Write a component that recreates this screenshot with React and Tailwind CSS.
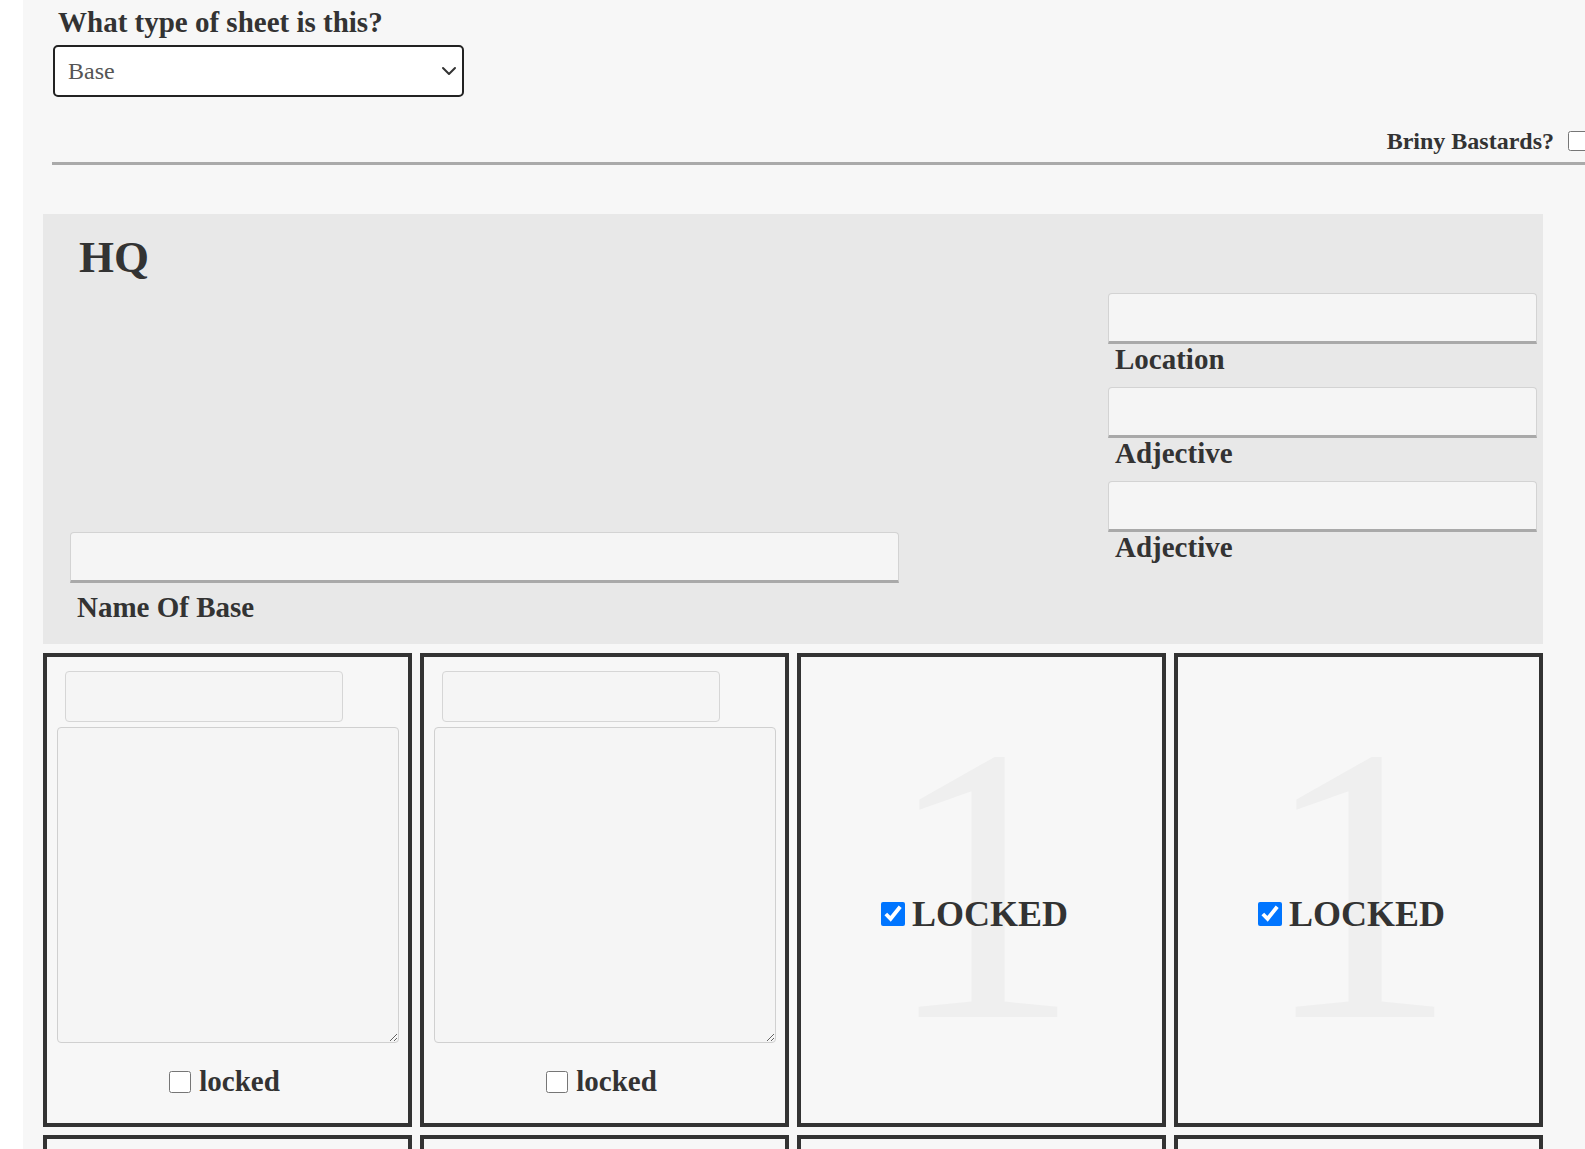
import { ChevronDown } from 'lucide-react'

const serif = "font-['Liberation_Serif','Times_New_Roman',serif]"

function Field({ className = '' }) {
  return (
    <input
      type="text"
      className={`block h-[51px] bg-[#f5f5f5] border border-[#d3d3d3] border-b-[3px] border-b-[#a9a9a9] rounded-t-[4px] outline-none ${className}`}
    />
  )
}

function Label({ children, className = '' }) {
  return <div className={`text-[29px] leading-[29px] font-bold text-[#333] ${className}`}>{children}</div>
}

function OpenCard() {
  return (
    <div className="h-[474px] border-4 border-[#333] bg-[#f7f7f7] flex flex-col">
      <input
        type="text"
        className="ml-[18px] mt-[14px] w-[278px] h-[51px] bg-[#f5f5f5] border border-[#d6d6d6] rounded-[4px] outline-none"
      />
      <textarea className="ml-[10px] mt-[5px] w-[342px] h-[316px] bg-[#f5f5f5] border border-[#d0d0d0] rounded-[4px] outline-none" />
      <label className="mt-[24px] flex items-center justify-center gap-[8px] pr-[6px]">
        <input type="checkbox" className="w-[22px] h-[22px] m-0" />
        <span className="text-[29px] leading-[29px] font-bold text-[#333]">locked</span>
      </label>
    </div>
  )
}

function LockedCard() {
  return (
    <div className="relative h-[474px] border-4 border-[#333] bg-[#f7f7f7] overflow-hidden">
      <div className="absolute inset-0 flex items-center justify-center pl-[2px] pb-[12px]">
        <span className="text-[394px] leading-none text-[#efefef]">1</span>
      </div>
      <label className="absolute inset-0 flex items-center justify-center gap-[7px] pt-[48px] pr-[14px]">
        <input type="checkbox" defaultChecked className="w-[24px] h-[24px] m-0" />
        <span className="text-[36px] leading-[36px] font-bold text-[#333]">LOCKED</span>
      </label>
    </div>
  )
}

function EmptyCard() {
  return <div className="h-[474px] border-4 border-[#333] bg-[#f7f7f7]" />
}

export default function App() {
  return (
    <div className={`flex h-screen bg-white overflow-hidden ${serif}`}>
      <div className="w-[23px] shrink-0 bg-white" />
      <div className="flex-1 bg-[#f7f7f7]">
        <h1 className="ml-[35px] pt-[8px] text-[29px] leading-[29px] font-bold text-[#333]">What type of sheet is this?</h1>

        <div className="relative ml-[30px] mt-[8px] w-[411px] h-[52px]">
          <select className="appearance-none w-full h-full bg-white border-2 border-[#222] rounded-[5px] pl-[13px] text-[24px] text-[#555] outline-none">
            <option>Base</option>
          </select>
          <ChevronDown className="absolute right-[3px] top-[14px] w-[24px] h-[24px] text-[#333] pointer-events-none" strokeWidth={2} />
        </div>

        <div className="mt-[32px] flex items-center justify-end gap-[14px] mr-[-3px]">
          <span className="text-[24px] leading-[24px] font-bold text-[#333]">Briny Bastards?</span>
          <input type="checkbox" className="w-[20px] h-[20px] m-0" />
        </div>

        <div className="ml-[29px] mt-[9px] h-[3px] bg-[#aaa]" />

        <div className="ml-[20px] mt-[49px] w-[1500px] h-[430px] bg-[#e8e8e8] flex">
          <div className="flex-1 flex flex-col pt-[21px] pb-[22px]">
            <h2 className="ml-[36px] text-[45px] leading-[45px] font-bold text-[#333]">HQ</h2>
            <div className="mt-auto ml-[27px]">
              <Field className="w-[829px]" />
              <Label className="ml-[7px] mt-[10px]">Name Of Base</Label>
            </div>
          </div>
          <div className="w-[429px] mr-[6px] pt-[79px] flex flex-col">
            {['Location', 'Adjective', 'Adjective'].map((t, i) => (
              <div key={i} className="mb-[13px]">
                <Field className="w-full" />
                <Label className="ml-[7px] mt-[1px]">{t}</Label>
              </div>
            ))}
          </div>
        </div>

        <div className="ml-[20px] mt-[9px] w-[1500px] grid grid-cols-4 gap-[8px]">
          <OpenCard />
          <OpenCard />
          <LockedCard />
          <LockedCard />
          <EmptyCard />
          <EmptyCard />
          <EmptyCard />
          <EmptyCard />
        </div>
      </div>
    </div>
  )
}
